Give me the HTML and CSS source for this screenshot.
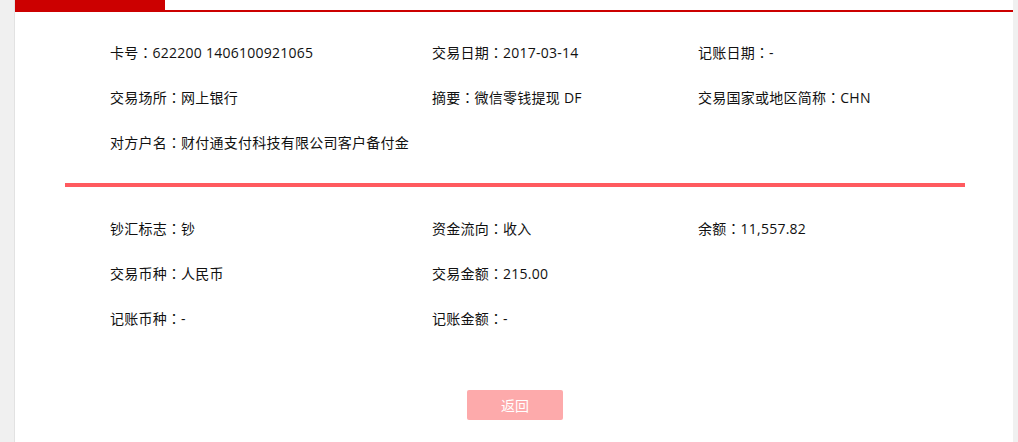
FILE: index.html
```html
<!DOCTYPE html>
<html lang="zh-CN">
<head>
<meta charset="utf-8">
<title>交易明细</title>
<link rel="stylesheet" href="styles.css">
</head>
<body>
<div class="page">
  <div class="topbar"><div class="tab"></div></div>
  <div class="content">
    <div class="grid first">
      <div class="item">卡号<span class="sep" lang="zh-TW">：</span>622200 1406100921065</div>
      <div class="item">交易日期<span class="sep" lang="zh-TW">：</span>2017-03-14</div>
      <div class="item">记账日期<span class="sep" lang="zh-TW">：</span>-</div>
      <div class="item">交易场所<span class="sep" lang="zh-TW">：</span>网上银行</div>
      <div class="item">摘要<span class="sep" lang="zh-TW">：</span>微信零钱提现 DF</div>
      <div class="item">交易国家或地区简称<span class="sep" lang="zh-TW">：</span>CHN</div>
      <div class="item">对方户名<span class="sep" lang="zh-TW">：</span>财付通支付科技有限公司客户备付金</div>
    </div>
    <div class="divider"></div>
    <div class="grid second">
      <div class="item">钞汇标志<span class="sep" lang="zh-TW">：</span>钞</div>
      <div class="item">资金流向<span class="sep" lang="zh-TW">：</span>收入</div>
      <div class="item">余额<span class="sep" lang="zh-TW">：</span>11,557.82</div>
      <div class="item">交易币种<span class="sep" lang="zh-TW">：</span>人民币</div>
      <div class="item">交易金额<span class="sep" lang="zh-TW">：</span>215.00</div>
      <div class="item"></div>
      <div class="item">记账币种<span class="sep" lang="zh-TW">：</span>-</div>
      <div class="item">记账金额<span class="sep" lang="zh-TW">：</span>-</div>
    </div>
    <div class="actions"><button class="btn-back" type="button">返回</button></div>
  </div>
</div>
</body>
</html>
```
FILE: styles.css
```css
html, body {
  margin: 0;
  padding: 0;
  background: #f0f0f0;
  font-family: "Open Sans", "Noto Sans CJK SC", sans-serif;
  font-size: 14px;
  color: #111;
}
.page {
  margin-left: 14px;
  width: 998px;
  min-height: 460px;
  background: #fff;
  border-left: 1px solid #e2e2e2;
}
.topbar {
  height: 10px;
  border-bottom: 2px solid #cc0000;
}
.tab {
  width: 150px;
  height: 12px;
  background: #cc0000;
}
.content {
  width: 900px;
  margin-left: 50px;
}
.grid {
  display: grid;
  grid-template-columns: 322px 266px 1fr;
  padding-left: 45px;
}
.item {
  height: 45px;
  line-height: 45px;
  white-space: nowrap;
  letter-spacing: 0.25px;
}
.sep {
  font-family: "Noto Sans CJK TC", "Noto Sans CJK SC", sans-serif;
  letter-spacing: 0;
}
.grid.first { padding-top: 18px; }
.grid.second { padding-top: 19px; }
.divider {
  margin-top: 18px;
  height: 4px;
  background: #ff5a5f;
}
.actions {
  display: flex;
  justify-content: center;
  padding-top: 49px;
}
.btn-back {
  width: 96px;
  height: 30px;
  border: none;
  border-radius: 2px;
  background: #fdaaab;
  color: #fff;
  font-family: "Noto Sans CJK SC", sans-serif;
  font-size: 14px;
  padding: 0;
}
```
